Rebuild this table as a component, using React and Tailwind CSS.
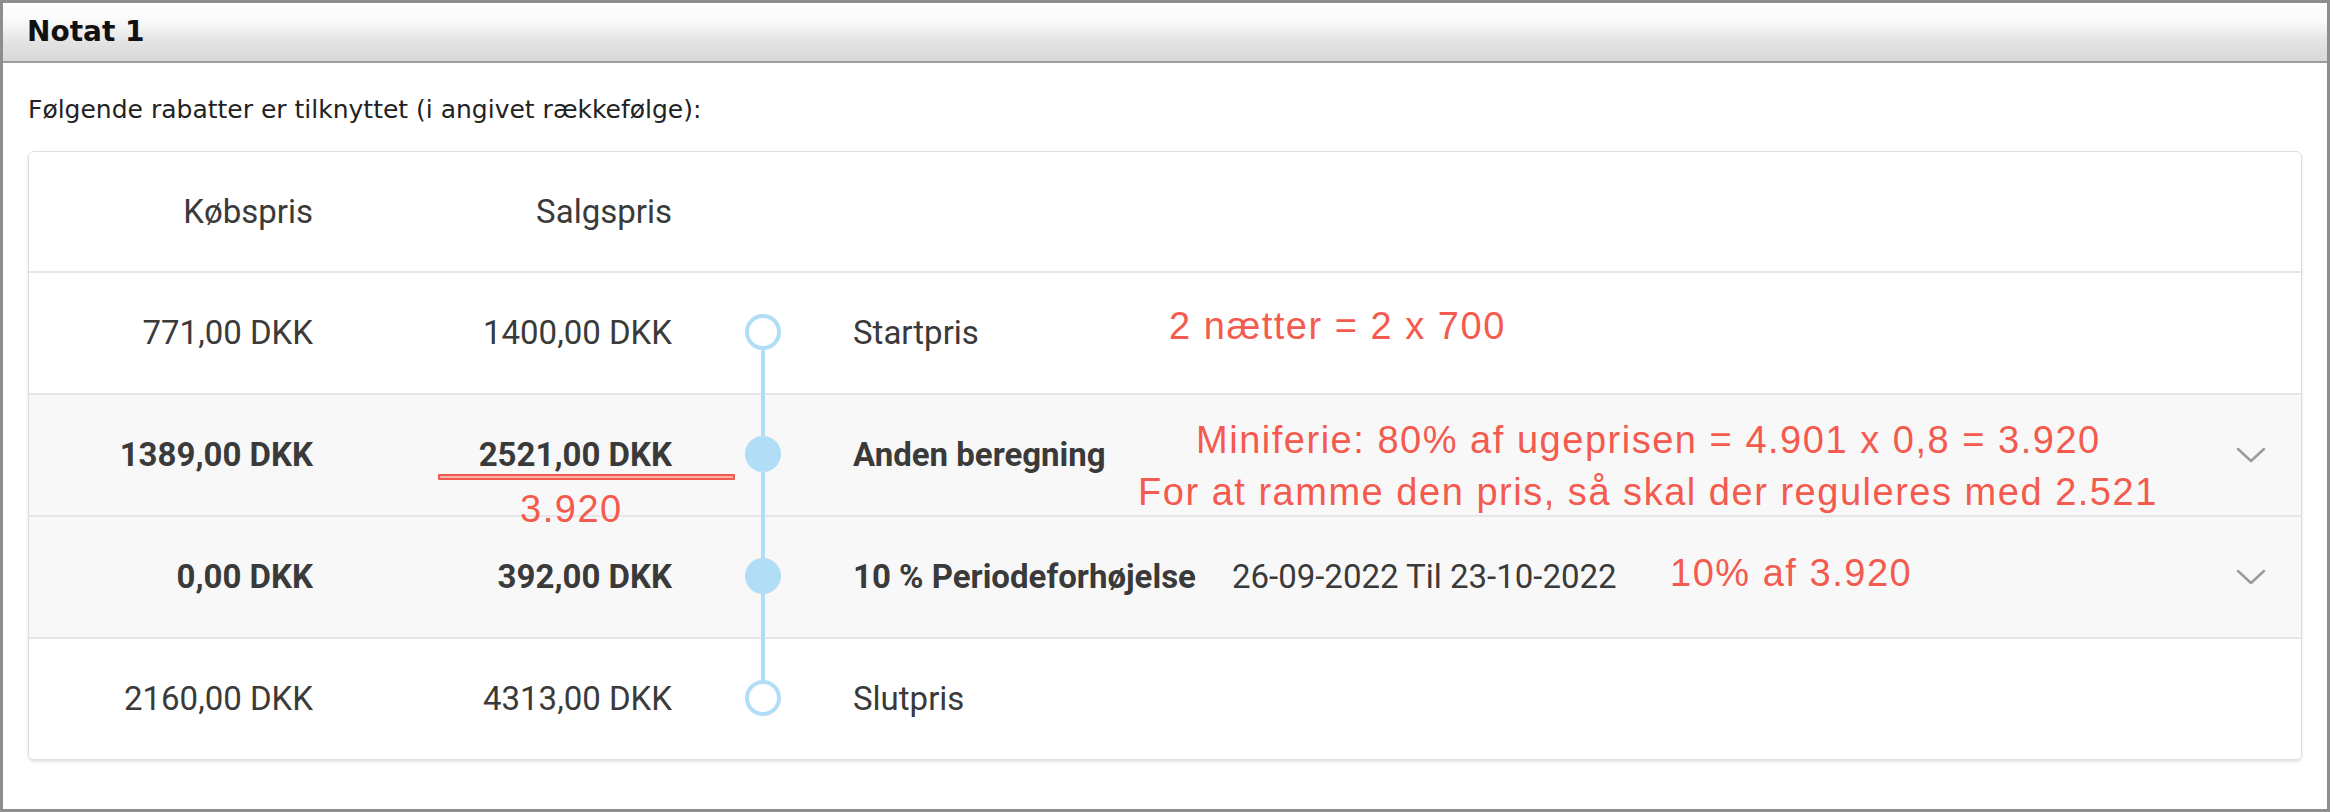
import React from "react";

const roboto = "font-['Roboto',sans-serif]";
const redText =
  "absolute whitespace-nowrap font-['Liberation_Sans',Arial,sans-serif] text-[38px] leading-none tracking-[0.04em] text-[#f45a4e]";

function Chevron() {
  return (
    <svg width="30" height="16" viewBox="0 0 30 16" className="shrink-0">
      <polyline
        points="2,2 15,14 28,2"
        fill="none"
        stroke="#9b9b9b"
        strokeWidth="2.5"
        strokeLinecap="round"
        strokeLinejoin="round"
      />
    </svg>
  );
}

function TimelineCell({ first, last, filled }) {
  return (
    <div className="w-[181px] shrink-0 self-stretch -mt-[2px] flex flex-col items-center">
      <div className={`flex-1 w-[4px] ${first ? "" : "bg-[#b1ddf6]"}`} />
      <div
        className={`w-[36px] h-[36px] shrink-0 rounded-full ${
          filled ? "bg-[#b1ddf6]" : "bg-white border-[4px] border-[#b1ddf6]"
        }`}
      />
      <div className={`flex-1 w-[4px] ${last ? "" : "bg-[#b1ddf6]"}`} />
    </div>
  );
}

function Row({ kob, salg, label, extra, bold, gray, first, last, filled, chevron }) {
  const weight = bold ? "font-bold" : "font-normal";
  return (
    <div
      className={`h-[122px] border-t-2 border-[#e6e6e6] flex items-center pr-[35px] ${
        gray ? "bg-[#f8f8f8]" : "bg-white"
      }`}
    >
      <div className={`w-[284px] shrink-0 text-right ${weight}`}>{kob}</div>
      <div className={`w-[359px] shrink-0 text-right ${weight}`}>{salg}</div>
      <TimelineCell first={first} last={last} filled={filled} />
      <div className="flex-1 flex items-center">
        <span className={weight}>{label}</span>
        {extra && <span className="ml-[36px] font-normal">{extra}</span>}
      </div>
      {chevron && <Chevron />}
    </div>
  );
}

export default function App() {
  return (
    <div className="w-[2330px] h-[812px] border-[3px] border-[#8d8d8d] bg-white flex flex-col overflow-hidden">
      <div className="h-[60px] shrink-0 border-b-2 border-[#9c9c9c] bg-[linear-gradient(to_bottom,#ffffff_0%,#fafafa_30%,#e3e3e3_68%,#d8d8d8_100%)] flex items-center px-[24px]">
        <span className="font-['DejaVu_Sans',Verdana,sans-serif] font-bold text-[28px] text-[#111]">
          Notat 1
        </span>
      </div>
      <div className="px-[25px] pt-[32px]">
        <p className="font-['DejaVu_Sans',Verdana,sans-serif] text-[25px] leading-[30px] text-[#222]">
          Følgende rabatter er tilknyttet (i angivet rækkefølge):
        </p>
        <div
          className={`relative mt-[26px] border border-[#dedede] rounded-[6px] shadow-[0_2px_3px_rgba(0,0,0,0.12)] overflow-hidden ${roboto} text-[33px] text-[#3a3a3a]`}
        >
          <div className="h-[119px] flex items-center bg-white">
            <div className="w-[284px] shrink-0 text-right">Købspris</div>
            <div className="w-[359px] shrink-0 text-right">Salgspris</div>
          </div>
          <Row kob="771,00 DKK" salg="1400,00 DKK" label="Startpris" first />
          <Row
            kob="1389,00 DKK"
            salg="2521,00 DKK"
            label="Anden beregning"
            bold
            gray
            filled
            chevron
          />
          <Row
            kob="0,00 DKK"
            salg="392,00 DKK"
            label="10 % Periodeforhøjelse"
            extra="26-09-2022 Til 23-10-2022"
            bold
            gray
            filled
            chevron
          />
          <Row kob="2160,00 DKK" salg="4313,00 DKK" label="Slutpris" last />

          <div className="absolute left-[409px] top-[322px] w-[297px] h-[6px] border-2 border-[#f45a4e] bg-[#f9b3ab] rounded-[1px]" />
          <span className={`${redText} left-[491px] top-[338px]`}>3.920</span>
          <span className={`${redText} left-[1140px] top-[155px]`}>2 nætter = 2 x 700</span>
          <span className={`${redText} left-[1167px] top-[269px]`}>
            Miniferie: 80% af ugeprisen = 4.901 x 0,8 = 3.920
          </span>
          <span className={`${redText} left-[1109px] top-[321px]`}>
            For at ramme den pris, så skal der reguleres med 2.521
          </span>
          <span className={`${redText} left-[1641px] top-[402px]`}>10% af 3.920</span>
        </div>
      </div>
    </div>
  );
}
